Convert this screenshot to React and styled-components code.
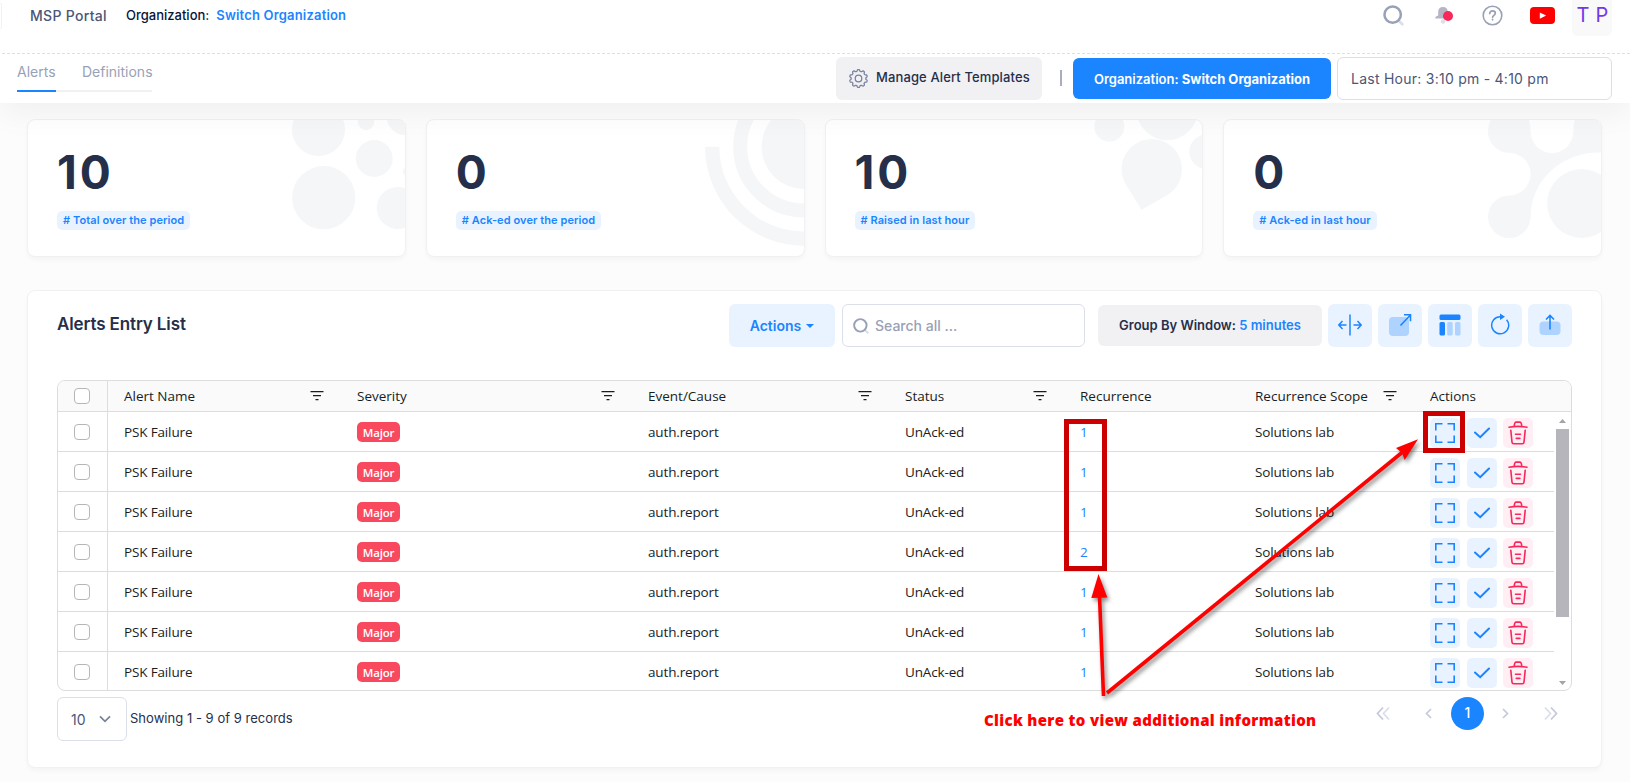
import React, { useState } from "react";
import styled, { createGlobalStyle, css } from "styled-components";

const GlobalStyle = createGlobalStyle`
  * {
    box-sizing: border-box;
  }
  body {
    margin: 0;
    background-color: #fcfcfc;
    font-family: Inter, "Liberation Sans", sans-serif;
    color: #252f4a;
    overflow: hidden;
  }
  button, input {
    font-family: inherit;
  }
  svg {
    display: block;
    flex: none;
  }
`;

const AppWrapper = styled.div`
  height: 782px;
  overflow: hidden;
`;

const Header = styled.header`
  position: relative;
  z-index: 1;
  height: 103px;
  background-color: #ffffff;
  box-shadow: 0 10px 30px 0 rgba(0, 0, 0, 0.05);
`;

const TopBar = styled.div`
  display: flex;
  align-items: flex-start;
  height: 53px;
`;

const MenuEdge = styled.div`
  width: 2px;
  height: 26px;
  margin-top: 3px;
  border: 1px solid #f1f1f4;
  border-left: 0;
  border-radius: 0 4px 4px 0;
`;

const Brand = styled.div`
  width: 96px;
  margin-left: 28px;
  padding-top: 6px;
  font-size: 14px;
  line-height: 20px;
  font-weight: 500;
  letter-spacing: 0.3px;
  color: #4b5675;
  white-space: nowrap;
`;

const OrgLabel = styled.div`
  display: flex;
  gap: 7px;
  padding-top: 5px;
  font-size: 13px;
  line-height: 20px;
  font-weight: 500;
  color: #071437;
  white-space: nowrap;
`;

const OrgLink = styled.a`
  font-weight: 600;
  letter-spacing: 0.18px;
  color: #1b84ff;
`;

const TopIcons = styled.div`
  display: flex;
  margin-left: auto;
  margin-right: 18px;
  height: 36px;
`;

const TopIcon = styled.div`
  width: ${(props) => props.$w}px;
  padding-top: 5px;
`;

const Avatar = styled.div`
  width: 40px;
  height: 36px;
  padding: 3px 0 0 1px;
  background-color: #f9f9f9;
  border-radius: 0 0 6px 6px;
  text-align: center;
  font-size: 20px;
  line-height: 24px;
  letter-spacing: 0.2px;
  color: #7239ea;
  white-space: nowrap;
`;

const DashedLine = styled.div`
  height: 1px;
  margin-left: 2px;
  background: repeating-linear-gradient(90deg, #dbdfe9 0 3px, transparent 3px 5px);
`;

const SubBar = styled.div`
  display: flex;
  align-items: flex-start;
  height: 49px;
  padding: 3px 18px 0 17px;
`;

const Tabs = styled.div`
  display: flex;
  height: 35px;
  border-bottom: 2px solid #f1f1f4;
`;

const Tab = styled.div`
  width: ${(props) => props.$w}px;
  height: 35px;
  margin-right: ${(props) => props.$gap || 0}px;
  padding-top: 5px;
  font-size: 14px;
  line-height: 20px;
  font-weight: 400;
  color: #99a1b7;
  white-space: nowrap;
  ${(props) => props.$active && css`border-bottom: 2px solid #1b84ff;`}
`;

const SubActions = styled.div`
  display: flex;
  align-items: center;
  height: 43px;
  margin-left: auto;
`;

const ManageButton = styled.button`
  display: flex;
  align-items: center;
  gap: 8px;
  width: 206px;
  height: 43px;
  padding: 0 0 0 13px;
  border: 0;
  border-radius: 6px;
  background-color: #f1f1f4;
  font-size: 13px;
  font-weight: 500;
  color: #252f4a;
  white-space: nowrap;

  span {
    padding-bottom: 3px;
    letter-spacing: 0.12px;
  }
`;

const Divider = styled.div`
  width: 2px;
  height: 16px;
  margin: 0 11px 1px 18px;
  background-color: #a8aec0;
`;

const OrgButton = styled.button`
  width: 258px;
  height: 41px;
  padding: 0;
  border: 0;
  border-radius: 6px;
  background-color: #1b84ff;
  font-size: 13px;
  font-weight: 600;
  letter-spacing: 0;
  color: #ffffff;
  white-space: nowrap;

  b {
    font-weight: 700;
  }
`;

const DateBox = styled.div`
  width: 275px;
  height: 43px;
  margin-left: 6px;
  padding-left: 13px;
  border: 1px solid #dbdfe9;
  border-radius: 6px;
  font-size: 14px;
  line-height: 42px;
  letter-spacing: 0.25px;
  color: #4b5675;
  white-space: nowrap;
`;

const Main = styled.main`
  padding: 16px 28px 0 27px;
`;

const cardBox = css`
  background-color: #ffffff;
  border: 1px solid #f1f1f4;
  border-radius: 8px;
  box-shadow: 0 3px 4px 0 rgba(0, 0, 0, 0.03);
`;

const Cards = styled.div`
  display: grid;
  grid-template-columns: repeat(4, 1fr);
  gap: 20px;
`;

const Card = styled.div`
  ${cardBox}
  display: flex;
  justify-content: space-between;
  height: 138px;
  overflow: hidden;
`;

const CardBody = styled.div`
  display: flex;
  flex-direction: column;
  align-items: flex-start;
  padding: 24px 0 0 29px;
`;

const CardNumber = styled.div`
  height: 67px;
  font-size: 46px;
  line-height: 56px;
  font-weight: 700;
  letter-spacing: 3px;
`;

const CardTag = styled.div`
  height: 19px;
  padding: 0 6px;
  border-radius: 5px;
  background-color: #e9f3ff;
  font-size: 11px;
  line-height: 19px;
  font-weight: 600;
  letter-spacing: 0.08px;
  color: #1b84ff;
  white-space: nowrap;
`;

const Panel = styled.section`
  ${cardBox}
  height: 478px;
  margin-top: 33px;
  padding: 13px 29px 0;
`;

const PanelBar = styled.div`
  display: flex;
  align-items: center;
  height: 43px;
`;

const Title = styled.h3`
  margin: 0 auto 3px 0;
  font-size: 17px;
  line-height: 24px;
  font-weight: 600;
  letter-spacing: -0.12px;
`;

const ActionsButton = styled.button`
  display: flex;
  align-items: center;
  justify-content: center;
  gap: 5px;
  width: 106px;
  height: 43px;
  padding: 0;
  border: 0;
  border-radius: 6px;
  background-color: #e9f3ff;
  font-size: 14px;
  font-weight: 600;
  color: #1b84ff;
`;

const SearchBox = styled.div`
  display: flex;
  align-items: center;
  gap: 6px;
  width: 243px;
  height: 43px;
  margin-left: 7px;
  padding-left: 10px;
  border: 1px solid #dbdfe9;
  border-radius: 6px;
`;

const SearchInput = styled.input`
  width: 190px;
  border: 0;
  padding: 0;
  outline: none;
  font-size: 14px;
  font-weight: 500;
  color: #4b5675;
  background: transparent;

  &::placeholder {
    color: #99a1b7;
  }
`;

const GroupButton = styled.button`
  width: 224px;
  height: 41px;
  margin: 0 6px 0 13px;
  padding: 0 0 1px;
  border: 0;
  border-radius: 6px;
  background-color: #f1f1f4;
  font-size: 13px;
  font-weight: 600;
  color: #252f4a;
  white-space: nowrap;

  b {
    font-weight: 600;
    color: #1b84ff;
  }
`;

const ToolButtons = styled.div`
  display: flex;
  gap: 6px;
`;

const ToolButton = styled.button`
  display: flex;
  align-items: center;
  justify-content: center;
  width: 44px;
  height: 43px;
  padding: 0 0 1px;
  border: 0;
  border-radius: 6px;
  background-color: #e9f3ff;
`;

const Table = styled.div`
  height: 311px;
  margin-top: 33px;
  border: 1px solid #dddddf;
  border-radius: 8px;
  overflow: hidden;
  font-family: "Open Sans", "Noto Sans", sans-serif;
  font-size: 13.5px;
  letter-spacing: -0.15px;
  color: #181d1f;
`;

const TableHead = styled.div`
  display: flex;
  height: 31px;
  border-bottom: 1px solid #dddddf;
  background-color: #fafafb;
  font-weight: 500;
  letter-spacing: 0;
`;

const TableBody = styled.div`
  display: flex;
  height: 279px;
`;

const Rows = styled.div`
  width: 1496px;
  overflow: hidden;
`;

const Row = styled.div`
  display: flex;
  height: 40px;
  border-bottom: 1px solid #dddddf;
`;

const CheckCell = styled.div`
  display: flex;
  flex: none;
  align-items: center;
  justify-content: center;
  width: 50px;
  padding-right: 2px;
  border-right: 1px solid #dddddf;
`;

const Checkbox = styled.span`
  width: 16px;
  height: 16px;
  border: 1px solid #b4b6ba;
  border-radius: 4px;
  background-color: #ffffff;
`;

const Cell = styled.div`
  display: flex;
  flex: none;
  align-items: center;
  width: ${(props) => props.$w}px;
  padding: 0 16px;
  white-space: nowrap;
`;

const HeadCell = styled(Cell)`
  justify-content: space-between;
  padding-right: 17px;
`;

const Severity = styled.span`
  width: 43px;
  height: 20px;
  border-radius: 5px;
  background-color: #f8495f;
  font-size: 11.5px;
  line-height: 21px;
  font-weight: 600;
  letter-spacing: -0.2px;
  text-align: center;
  color: #ffffff;
`;

const CountLink = styled.a`
  font-weight: 500;
  color: #1b84ff;
`;

const RowActions = styled.div`
  display: flex;
  flex: none;
  align-items: center;
  padding: 3px 0 0 16px;
`;

const RowButton = styled.button`
  display: flex;
  align-items: center;
  justify-content: center;
  width: 30px;
  height: 30px;
  margin-right: ${(props) => props.$gap || 0}px;
  padding: 0;
  border: 0;
  border-radius: 5px;
  background-color: ${(props) => (props.$danger ? "#ffeef3" : "#e9f3ff")};
`;

const ScrollBar = styled.div`
  display: flex;
  flex-direction: column;
  align-items: center;
  width: 13px;
  margin-left: 2px;
  padding: 7px 0 6px;
`;

const ScrollThumb = styled.div`
  width: 13px;
  height: 188px;
  margin: 6px 0 auto;
  background-color: #b5b5bb;
`;

const PanelFooter = styled.div`
  display: flex;
  align-items: flex-start;
  padding-top: 6px;
`;

const PageSize = styled.div`
  display: flex;
  align-items: center;
  justify-content: space-between;
  width: 70px;
  height: 44px;
  padding: 0 15px 0 13px;
  border: 1px solid #dbdfe9;
  border-radius: 6px;
  font-size: 14px;
  color: #4b5675;
`;

const Showing = styled.div`
  margin-left: 3px;
  font-size: 13px;
  line-height: 43px;
  letter-spacing: 0.03px;
  white-space: nowrap;
`;

const Pager = styled.div`
  display: flex;
  align-items: center;
  height: 33px;
  margin-left: auto;
  padding-right: 14px;
`;

const PagerNumber = styled.div`
  width: 33px;
  height: 33px;
  margin: 0 18px 0 19px;
  border-radius: 50%;
  background-color: #1b84ff;
  text-align: center;
  font-size: 14px;
  line-height: 32px;
  font-weight: 500;
  color: #ffffff;
`;

const PagerStep = styled.div`
  margin-right: ${(props) => props.$gap || 0}px;
`;

// callouts drawn over the page
const Highlight = styled.div`
  position: absolute;
  z-index: 2;
  left: ${(props) => props.$x}px;
  top: ${(props) => props.$y}px;
  width: ${(props) => props.$w}px;
  height: ${(props) => props.$h}px;
  border: 5px solid #cc0000;
`;

const Arrows = styled.svg`
  position: absolute;
  z-index: 2;
  left: 1060px;
  top: 410px;
  filter: drop-shadow(2px 3px 2px rgba(0, 0, 0, 0.45));
`;

const Note = styled.div`
  position: absolute;
  z-index: 2;
  left: 984px;
  top: 709px;
  font-family: "Open Sans", Lato, sans-serif;
  font-size: 15px;
  line-height: 22px;
  font-weight: 800;
  letter-spacing: 0.34px;
  color: #ff0000;
  white-space: nowrap;
`;

const SearchIcon = ({ size }) => (
  <svg width={size} height={size} viewBox="0 0 20 20" fill="none">
    <path d="M15 15l3.4 3.4" stroke="#dbdfe9" strokeWidth="2.6" strokeLinecap="round" />
    <circle cx="9.2" cy="9.2" r="7.8" stroke="#99a1b7" strokeWidth="2.4" />
  </svg>
);

const BellIcon = () => (
  <svg width="20" height="20" viewBox="0 0 20 20">
    <circle cx="9" cy="16.5" r="2.2" fill="#dbdfe9" />
    <path d="M9 2c3 0 4.8 2 4.8 4.8V9.5l3 2.5v1.5H1.5c-.8-1 0-2 2.7-3V6.8C4.2 4 6 2 9 2z" fill="#b5b5c3" />
    <circle cx="14" cy="11" r="5" fill="#f8285a" />
  </svg>
);

const HelpIcon = () => (
  <svg width="21" height="21" viewBox="0 0 21 21" fill="none" stroke="#99a1b7">
    <circle cx="10.5" cy="10.5" r="9.3" strokeWidth="1.6" />
    <path d="M7.7 8.6c0-1.7 1.2-2.7 2.8-2.7s2.8 1 2.8 2.4c0 2-2.7 2.1-2.7 4" strokeWidth="1.7" strokeLinecap="round" />
    <circle cx="10.6" cy="14.7" r="0.6" fill="#99a1b7" strokeWidth="0.8" />
  </svg>
);

const VideoIcon = () => (
  <svg width="25" height="20" viewBox="0 0 25 20">
    <rect y="2" width="25" height="17" rx="4" fill="#ff0000" />
    <path d="M9.8 7.4v6.4l6.4-3.2z" fill="#ffffff" />
  </svg>
);

const gearPath = () => {
  let d = "";
  for (let i = 0; i <= 160; i++) {
    const a = (i / 160) * Math.PI * 2;
    const r = 7.7 + 0.8 * Math.tanh(2 * Math.cos(a * 10));
    d += (i ? "L" : "M") + (9 + r * Math.sin(a)).toFixed(2) + " " + (9 - r * Math.cos(a)).toFixed(2);
  }
  return d + "Z";
};

const GearIcon = () => (
  <svg width="19" height="19" viewBox="0 0 18 18" fill="none" stroke="#78829d" strokeWidth="1.2">
    <path d={gearPath()} strokeLinejoin="round" />
    <circle cx="9" cy="9" r="3.1" />
  </svg>
);

const FilterIcon = () => (
  <svg width="14" height="10" viewBox="0 0 14 10" stroke="#181d1f" strokeWidth="1.3">
    <path d="M0.5 0.7h13M3 4.7h8M5.5 8.7h3" />
  </svg>
);

const ExpandIcon = () => (
  <svg width="20" height="20" viewBox="0 0 20 20" fill="none" stroke="#1b84ff" strokeWidth="1.6">
    <path d="M0.8 7.5V0.8H7.5M12.5 0.8H19.2V7.5M19.2 12.5V19.2H12.5M7.5 19.2H0.8V12.5" />
  </svg>
);

const CheckIcon = () => (
  <svg width="16" height="12" viewBox="0 0 16 12" fill="none" stroke="#1b84ff" strokeWidth="2">
    <path d="M1 5.5l5.2 4.7L15 1.5" strokeLinecap="round" />
  </svg>
);

const TrashIcon = () => (
  <svg width="20" height="24" viewBox="0 0 20 24" fill="none" stroke="#f8285a" strokeWidth="1.6" strokeLinecap="round">
    <path d="M1 6.2c5.5-1 12.5-1 18 0M6.2 5.3c.2-2.8.8-4.2 2-4.2h3.6c1.2 0 1.8 1.4 2 4.2M2.8 9.2l1.2 12c.1 1 .7 1.6 1.7 1.6h8.6c1 0 1.6-.6 1.7-1.6l1.2-12M7.5 13.2h5M8.3 17.4h3.6" />
  </svg>
);

const SplitIcon = () => (
  <svg width="24" height="22" viewBox="0 0 24 22" fill="none" stroke="#1b84ff" strokeWidth="1.5">
    <path d="M12 0.5v21" opacity="0.75" strokeWidth="2" />
    <path d="M0.8 11h7.7M4.5 7L0.8 11l3.7 4M15.5 11h7.7M19.5 7l3.7 4-3.7 4" />
  </svg>
);

const OpenIcon = () => (
  <svg width="24" height="24" viewBox="0 0 24 24" fill="none">
    <rect x="1" y="4" width="20" height="19" rx="4" fill="#aed3ff" />
    <path d="M12.5 12.5L22 2.5M16 1.7h6.5v6.5" stroke="#1b84ff" strokeWidth="1.6" />
  </svg>
);

const ColumnsIcon = () => (
  <svg width="22" height="22" viewBox="0 0 22 22">
    <rect x="0.5" y="0.5" width="21" height="5.5" rx="1.5" fill="#1b84ff" />
    <rect x="0.5" y="8" width="5.5" height="13.5" rx="1.5" fill="#1b84ff" />
    <rect x="8.2" y="8" width="5.5" height="13.5" rx="1.5" fill="#aed3ff" />
    <rect x="16" y="8" width="5.5" height="13.5" rx="1.5" fill="#aed3ff" />
  </svg>
);

const ReloadIcon = () => (
  <svg width="20" height="24" viewBox="0 0 20 24" fill="none">
    <path d="M16.6 6.7A8.5 8.5 0 1 1 10.5 3.8" stroke="#1b84ff" strokeWidth="1.5" />
    <path d="M10 0.5v6.6l5-3.3z" fill="#1b84ff" />
  </svg>
);

const UploadIcon = () => (
  <svg width="22" height="22" viewBox="0 0 22 22" fill="none">
    <rect x="0.5" y="7.5" width="21" height="13.5" rx="4" fill="#aed3ff" />
    <path d="M11 15.5V2M7 5.5l4-4L15 5.5" stroke="#1b84ff" strokeWidth="1.6" />
  </svg>
);

const Chevron = ({ left, color = "#c4cada" }) => (
  <svg width="7" height="11" viewBox="0 0 7 11" fill="none" stroke={color} strokeWidth="1.7">
    <path d={left ? "M6 1L1.5 5.5 6 10" : "M1 1l4.5 4.5L1 10"} />
  </svg>
);

const DoubleChevron = ({ left }) => (
  <svg width="14" height="15" viewBox="0 0 14 15" fill="none" strokeWidth="1.8">
    <path d={left ? "M13 1.5L7.5 7.5 13 13.5" : "M1 1.5l5.5 6-5.5 6"} stroke="#dbdfe9" />
    <path d={left ? "M7 1.5L1.5 7.5 7 13.5" : "M7 1.5l5.5 6-5.5 6"} stroke="#c4cada" />
  </svg>
);

const Decor = ({ x, children }) => (
  <svg width="130" height="136" viewBox={`${x} 120 130 136`} fill="#f5f6f8">
    {children}
  </svg>
);

const cards = [
  {
    value: "10",
    tag: "# Total over the period",
    decor: (
      <Decor x={275}>
        <circle cx="318.5" cy="129.5" r="26.5" />
        <circle cx="366" cy="122" r="8.2" />
        <circle cx="405" cy="117" r="18" />
        <circle cx="374.2" cy="158.5" r="18.5" />
        <circle cx="323.7" cy="197.7" r="31.6" />
        <circle cx="397.7" cy="208" r="21" />
        <circle cx="408" cy="171.7" r="5" />
      </Decor>
    ),
  },
  {
    value: "0",
    tag: "# Ack-ed over the period",
    decor: (
      <Decor x={674.3}>
        <path d="M705.3 146.7a99 99 0 0 0 99 99v-14.3a84.7 84.7 0 0 1-84.7-84.7z" />
        <circle cx="804.3" cy="146.7" r="63.8" fill="none" stroke="#f5f6f8" strokeWidth="14" />
        <circle cx="804.3" cy="146.7" r="42.4" />
      </Decor>
    ),
  },
  {
    value: "10",
    tag: "# Raised in last hour",
    decor: (
      <Decor x={1072}>
        <circle cx="1109.3" cy="126.7" r="15" />
        <circle cx="1167.3" cy="109.7" r="30.6" />
        <circle cx="1206.6" cy="151.7" r="17.3" />
        <path d="M1125.2 183.5L1141.7 209.7L1168 194.7A30.2 30.2 0 1 0 1125.2 183.5z" />
      </Decor>
    ),
  },
  {
    value: "0",
    tag: "# Ack-ed in last hour",
    decor: (
      <Decor x={1471}>
        <path d="M1491 119Q1488 125 1488 131.5A21.3 21.3 0 0 0 1509.3 152.8A21.3 21.3 0 0 1 1509.3 195.4A21.3 21.3 0 0 0 1509.3 238A21.3 21.3 0 0 0 1530.6 216.7A68 64 0 0 1 1601 152.5V119H1575Q1573.3 125 1573.3 131.7A21.3 21.3 0 0 1 1530.7 131.7Q1530.7 125 1528.5 119Z" />
        <circle cx="1581.7" cy="203.5" r="34.5" />
      </Decor>
    ),
  },
];

const columns = [
  { name: "Alert Name", width: 233, filter: true },
  { name: "Severity", width: 291, filter: true },
  { name: "Event/Cause", width: 257, filter: true },
  { name: "Status", width: 175, filter: true },
  { name: "Recurrence", width: 175 },
  { name: "Recurrence Scope", width: 175, filter: true },
  { name: "Actions", width: 158 },
];

const alerts = [1, 1, 1, 2, 1, 1, 1].map((count, idx) => ({
  id: idx,
  name: "PSK Failure",
  severity: "Major",
  cause: "auth.report",
  status: "UnAck-ed",
  count: count,
  scope: "Solutions lab",
}));

const App = () => {
  const [keyword, setKeyword] = useState("");

  return (
    <AppWrapper>
      <GlobalStyle />
      <Header>
        <TopBar>
          <MenuEdge />
          <Brand>MSP Portal</Brand>
          <OrgLabel>
            Organization: <OrgLink>Switch Organization</OrgLink>
          </OrgLabel>
          <TopIcons>
            <TopIcon $w={51}><SearchIcon size={21} /></TopIcon>
            <TopIcon $w={48}><BellIcon /></TopIcon>
            <TopIcon $w={48}><HelpIcon /></TopIcon>
            <TopIcon $w={42}><VideoIcon /></TopIcon>
            <Avatar>T P</Avatar>
          </TopIcons>
        </TopBar>
        <DashedLine />
        <SubBar>
          <Tabs>
            <Tab $w={39} $gap={26} $active>Alerts</Tab>
            <Tab $w={70}>Definitions</Tab>
          </Tabs>
          <SubActions>
            <ManageButton>
              <GearIcon />
              <span>Manage Alert Templates</span>
            </ManageButton>
            <Divider />
            <OrgButton>Organization: <b>Switch Organization</b></OrgButton>
            <DateBox>Last Hour: 3:10 pm - 4:10 pm</DateBox>
          </SubActions>
        </SubBar>
      </Header>
      <Main>
        <Cards>
          {cards.map((card) => (
            <Card key={card.tag}>
              <CardBody>
                <CardNumber>{card.value}</CardNumber>
                <CardTag>{card.tag}</CardTag>
              </CardBody>
              {card.decor}
            </Card>
          ))}
        </Cards>
        <Panel>
          <PanelBar>
            <Title>Alerts Entry List</Title>
            <ActionsButton>
              Actions
              <svg width="8" height="4" viewBox="0 0 8 4" fill="#1b84ff"><path d="M0 0h8L4 4z" /></svg>
            </ActionsButton>
            <SearchBox>
              <SearchIcon size={16} />
              <SearchInput placeholder="Search all ..." value={keyword} onChange={(e) => setKeyword(e.target.value)} />
            </SearchBox>
            <GroupButton>Group By Window: <b>5 minutes</b></GroupButton>
            <ToolButtons>
              <ToolButton><SplitIcon /></ToolButton>
              <ToolButton><OpenIcon /></ToolButton>
              <ToolButton><ColumnsIcon /></ToolButton>
              <ToolButton><ReloadIcon /></ToolButton>
              <ToolButton><UploadIcon /></ToolButton>
            </ToolButtons>
          </PanelBar>
          <Table>
            <TableHead>
              <CheckCell><Checkbox /></CheckCell>
              {columns.map((col) => (
                <HeadCell key={col.name} $w={col.width}>
                  {col.name}
                  {col.filter && <FilterIcon />}
                </HeadCell>
              ))}
            </TableHead>
            <TableBody>
              <Rows>
                {alerts.map((alert) => (
                  <Row key={alert.id}>
                    <CheckCell><Checkbox /></CheckCell>
                    <Cell $w={233}>{alert.name}</Cell>
                    <Cell $w={291}><Severity>{alert.severity}</Severity></Cell>
                    <Cell $w={257}>{alert.cause}</Cell>
                    <Cell $w={175}>{alert.status}</Cell>
                    <Cell $w={175}><CountLink>{alert.count}</CountLink></Cell>
                    <Cell $w={175}>{alert.scope}</Cell>
                    <RowActions>
                      <RowButton $gap={7}><ExpandIcon /></RowButton>
                      <RowButton $gap={6}><CheckIcon /></RowButton>
                      <RowButton $danger><TrashIcon /></RowButton>
                    </RowActions>
                  </Row>
                ))}
              </Rows>
              <ScrollBar>
                <svg width="7" height="4" viewBox="0 0 7 4" fill="#a3a3a8"><path d="M0 4h7L3.5 0z" /></svg>
                <ScrollThumb />
                <svg width="7" height="4" viewBox="0 0 7 4" fill="#a3a3a8"><path d="M0 0h7L3.5 4z" /></svg>
              </ScrollBar>
            </TableBody>
          </Table>
          <PanelFooter>
            <PageSize>
              10
              <svg width="12" height="8" viewBox="0 0 12 8" fill="none" stroke="#78829d" strokeWidth="1.7"><path d="M1 1.3l5 5 5-5" /></svg>
            </PageSize>
            <Showing>Showing 1 - 9 of 9 records</Showing>
            <Pager>
              <PagerStep $gap={35}><DoubleChevron left /></PagerStep>
              <PagerStep><Chevron left /></PagerStep>
              <PagerNumber>1</PagerNumber>
              <PagerStep $gap={35}><Chevron /></PagerStep>
              <PagerStep><DoubleChevron /></PagerStep>
            </Pager>
          </PanelFooter>
        </Panel>
      </Main>
      <Highlight $x={1064} $y={419} $w={43} $h={152} />
      <Highlight $x={1423} $y={411} $w={42} $h={42} />
      <Arrows width="370" height="300" viewBox="1060 410 370 300" fill="#ff0000" stroke="#ff0000">
        <path d="M1103.5 696L1099.5 596" strokeWidth="3.6" fill="none" />
        <path d="M1098.5 574l8.8 23.5-16 .5z" stroke="none" />
        <path d="M1107 693L1402 452.5" strokeWidth="3.6" fill="none" />
        <path d="M1418 439.3l-13.3 20.7-2.7-7-6-5z" stroke="none" />
      </Arrows>
      <Note>Click here to view additional information</Note>
    </AppWrapper>
  );
};

export default App;
